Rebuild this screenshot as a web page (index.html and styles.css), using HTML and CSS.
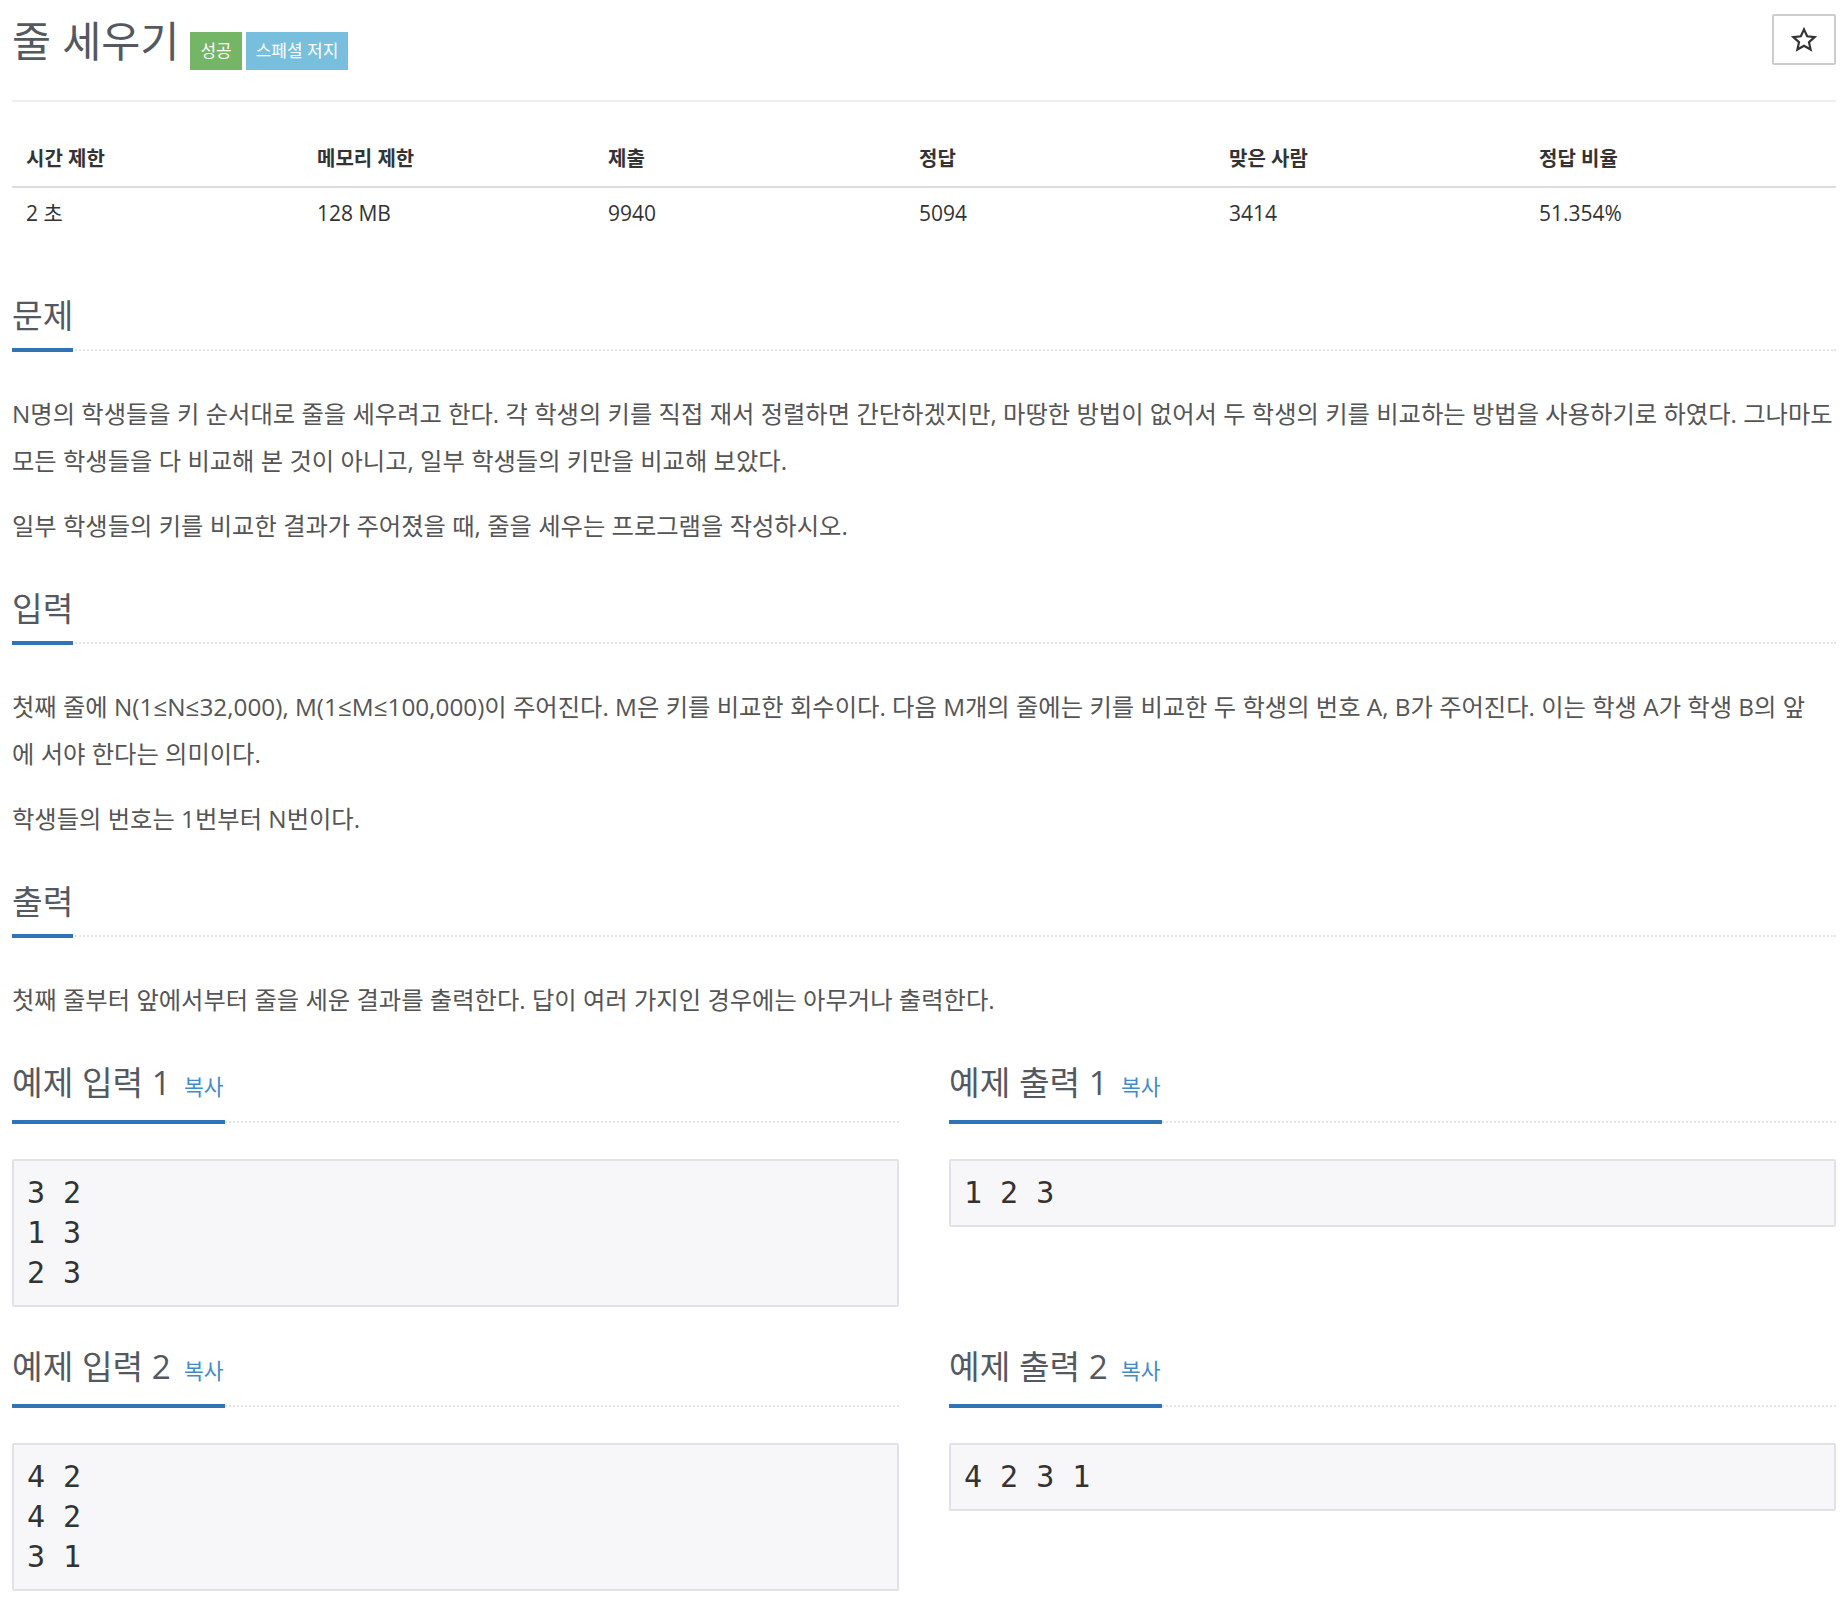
FILE: index.html
```html
<!DOCTYPE html>
<html lang="ko">
<head>
<meta charset="utf-8">
<title>줄 세우기</title>
<link rel="stylesheet" href="styles.css">
</head>
<body>
<div class="container">
  <div class="page-header">
    <h1 class="title"><span class="title-text">줄 세우기</span><span class="label label-success">성공</span><span class="label label-info">스페셜 저지</span></h1>
    <button class="star-btn" type="button" aria-label="즐겨찾기"><svg class="star" viewBox="0 0 24 24" width="26" height="26"><polygon points="12,2.2 14.9,8.6 21.8,9.3 16.6,14 18.1,20.8 12,17.3 5.9,20.8 7.4,14 2.2,9.3 9.1,8.6" fill="none" stroke="#333" stroke-width="2" stroke-linejoin="miter"/></svg></button>
  </div>

  <table class="info">
    <colgroup>
      <col class="c1"><col class="c2"><col class="c3"><col class="c4"><col class="c5"><col class="c6">
    </colgroup>
    <thead>
      <tr><th>시간 제한</th><th>메모리 제한</th><th>제출</th><th>정답</th><th>맞은 사람</th><th>정답 비율</th></tr>
    </thead>
    <tbody>
      <tr><td>2 초</td><td>128 MB</td><td>9940</td><td>5094</td><td>3414</td><td>51.354%</td></tr>
    </tbody>
  </table>

  <section class="section">
    <div class="headline"><h2>문제</h2></div>
    <div class="content">
      <p>N명의 학생들을 키 순서대로 줄을 세우려고 한다. 각 학생의 키를 직접 재서 정렬하면 간단하겠지만, 마땅한 방법이 없어서 두 학생의 키를 비교하는 방법을 사용하기로 하였다. 그나마도 모든 학생들을 다 비교해 본 것이 아니고, 일부 학생들의 키만을 비교해 보았다.</p>
      <p>일부 학생들의 키를 비교한 결과가 주어졌을 때, 줄을 세우는 프로그램을 작성하시오.</p>
    </div>
  </section>

  <section class="section">
    <div class="headline"><h2>입력</h2></div>
    <div class="content">
      <p>첫째 줄에 N(1≤N≤32,000), M(1≤M≤100,000)이 주어진다. M은 키를 비교한 회수이다. 다음 M개의 줄에는 키를 비교한 두 학생의 번호 A, B가 주어진다. 이는 학생 A가 학생 B의 앞<br>에 서야 한다는 의미이다.</p>
      <p>학생들의 번호는 1번부터 N번이다.</p>
    </div>
  </section>

  <section class="section">
    <div class="headline"><h2>출력</h2></div>
    <div class="content">
      <p>첫째 줄부터 앞에서부터 줄을 세운 결과를 출력한다. 답이 여러 가지인 경우에는 아무거나 출력한다.</p>
    </div>
  </section>

  <div class="samples">
    <section class="sample">
      <div class="headline"><h2>예제 입력 1<span class="copy">복사</span></h2></div>
      <pre>3 2
1 3
2 3</pre>
    </section>
    <section class="sample">
      <div class="headline"><h2>예제 출력 1<span class="copy">복사</span></h2></div>
      <pre>1 2 3</pre>
    </section>
    <section class="sample">
      <div class="headline"><h2>예제 입력 2<span class="copy">복사</span></h2></div>
      <pre>4 2
4 2
3 1</pre>
    </section>
    <section class="sample">
      <div class="headline"><h2>예제 출력 2<span class="copy">복사</span></h2></div>
      <pre>4 2 3 1</pre>
    </section>
  </div>
</div>
</body>
</html>
```

FILE: styles.css
```css
* {
  box-sizing: border-box;
}

html, body {
  margin: 0;
  padding: 0;
  background: #ffffff;
}

body {
  font-family: "Open Sans", "Noto Sans CJK KR", sans-serif;
  color: #555555;
}

.container {
  padding: 0 12px;
}

/* ---------- header ---------- */
.page-header {
  display: flex;
  justify-content: space-between;
  align-items: flex-start;
  padding-top: 14px;
  height: 102px;
  border-bottom: 2px solid #eeeeee;
}

.title {
  margin: 0;
  display: flex;
  align-items: baseline;
  font-size: 42.5px;
  line-height: 54px;
  font-weight: 400;
  color: #535861;
}

.label {
  display: inline-block;
  font-size: 17px;
  line-height: 18px;
  padding: 10px 10px;
  color: #ffffff;
  margin-left: 4px;
}

.label-success {
  background: #74b566;
  margin-left: 11px;
}

.label-info {
  background: #78bfdd;
}

.star-btn {
  display: flex;
  align-items: center;
  justify-content: center;
  width: 64px;
  height: 51px;
  border: 2px solid #cccccc;
  border-radius: 2px;
  background: #ffffff;
  padding: 0;
  margin: 0;
}

.star {
  display: block;
}

/* ---------- info table ---------- */
.info {
  width: 100%;
  border-collapse: collapse;
  table-layout: fixed;
  margin: 31px 0 57px;
  color: #333333;
  font-size: 21px;
  line-height: 26px;
}

.info .c1, .info .c2 { width: 291px; }
.info .c3 { width: 311px; }
.info .c4, .info .c5 { width: 310px; }

.info th {
  text-align: left;
  font-weight: 700;
  font-size: 20px;
  padding: 13px 14px 14px;
  border-bottom: 2px solid #dddddd;
}

.info td {
  padding: 12px 14px;
}

/* ---------- sections ---------- */
.section {
  margin-top: 39px;
}

.headline {
  display: flex;
  border-bottom: 2px dotted #e2e5ea;
  margin-bottom: 39px;
}

.headline h2 {
  margin: 0 0 -3px;
  font-size: 33.3px;
  line-height: 40px;
  font-weight: 400;
  color: #535861;
  padding-bottom: 13px;
  border-bottom: 4px solid #3074b8;
}

.copy {
  font-size: 21.5px;
  color: #428bca;
  margin-left: 13px;
  padding-right: 2px;
}

.content p {
  margin: 0 0 18px;
  font-size: 24.3px;
  line-height: 47px;
}

/* ---------- samples ---------- */
.samples {
  margin-top: 39px;
  display: grid;
  grid-template-columns: 1fr 1fr;
  column-gap: 50px;
  row-gap: 39px;
  align-items: start;
}

.sample .headline {
  margin-bottom: 36px;
}

.sample pre {
  margin: 0;
  padding: 12px 13px;
  background: #f7f7f9;
  border: 2px solid #e1e1e8;
  border-radius: 2px;
  color: #333333;
  font-family: "DejaVu Sans Mono", monospace;
  font-size: 30px;
  line-height: 40px;
  white-space: pre;
}
```
